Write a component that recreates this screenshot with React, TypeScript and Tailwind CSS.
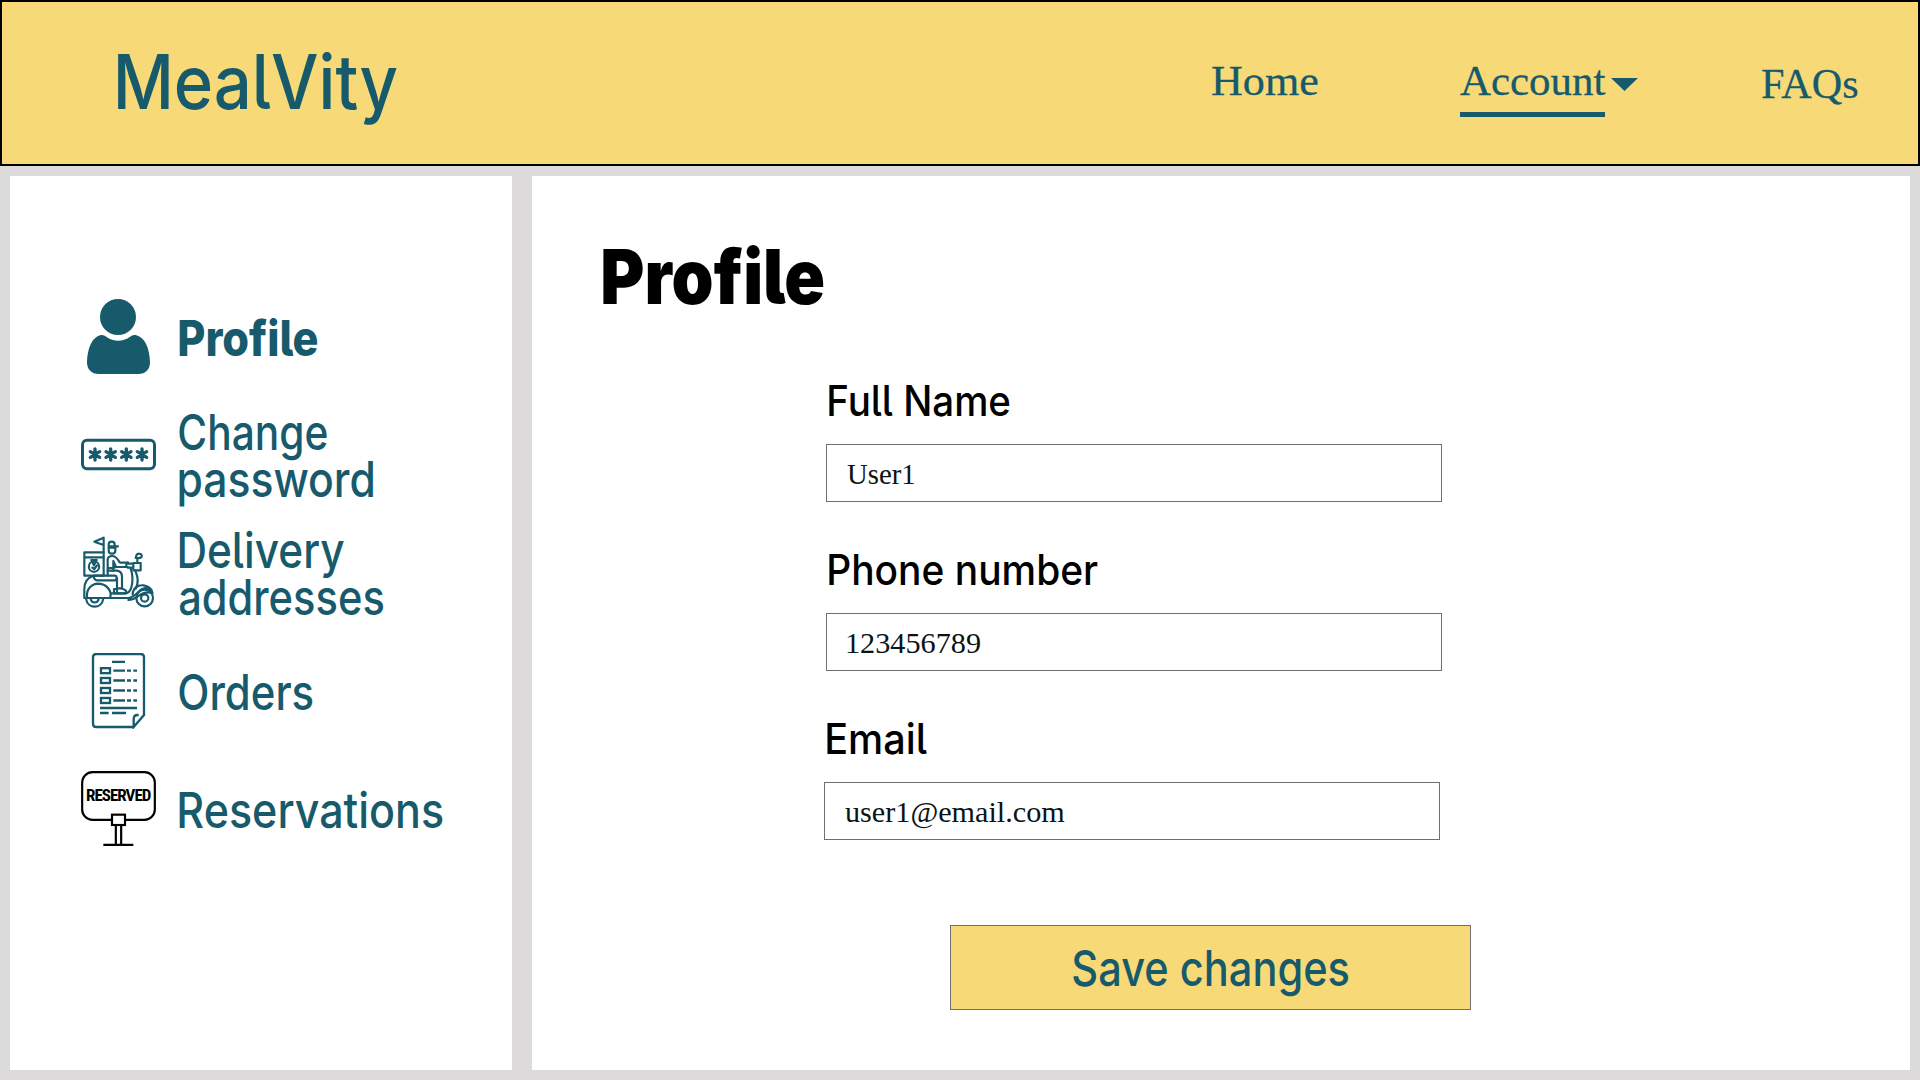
import { useLayoutEffect, useRef, useState } from "react";
import type { ReactNode } from "react";

type FitProps = { text: string; width: number; className?: string };

/* Text whose visible glyphs span exactly `width` pixels, starting at the left edge of the box. */
function Fit({ text, width, className = "" }: FitProps) {
  const ref = useRef<HTMLSpanElement>(null);
  const [transform, setTransform] = useState("none");

  useLayoutEffect(() => {
    const el = ref.current;
    const ctx = document.createElement("canvas").getContext("2d");
    if (!el || !ctx) return;
    const cs = getComputedStyle(el);
    ctx.font = `${cs.fontWeight} ${cs.fontSize} ${cs.fontFamily}`;
    const m = ctx.measureText(text);
    const left = -m.actualBoundingBoxLeft;
    const right = m.width - m.actualBoundingBoxRight;
    const scale = width / (el.offsetWidth - left - right);
    setTransform(`translateX(${-left * scale}px) scaleX(${scale})`);
  }, [text, width]);

  return (
    <span className="block whitespace-nowrap" style={{ width }}>
      <span ref={ref} className={`inline-block origin-left align-top ${className}`} style={{ transform }}>
        {text}
      </span>
    </span>
  );
}

const sans = "font-['Inter',sans-serif] [font-feature-settings:'cv05']";

function ProfileIcon() {
  return (
    <svg viewBox="33 42 228 228" className="size-[76px] shrink-0" fill="#175a6b">
      <circle cx="144" cy="96" r="54" />
      <path d="M92 150C99 149 104 151 110 156C131 171 158 171 179 156C185 151 190 149 197 150C225 156 239 190 240 232C240 254 226 267 205 267H87C65 267 51 254 51 232C52 190 66 156 92 150Z" />
    </svg>
  );
}

function PasswordIcon() {
  return (
    <svg viewBox="33 51 228 228" className="size-[76px] shrink-0" fill="none" stroke="#175a6b">
      <rect x="37.500" y="121" width="216" height="85" rx="13" strokeWidth="9" />
      {[75, 122, 169, 216].map((x) => (
        <path
          key={x}
          d={`M${x} 147V180M${x - 14} 155L${x + 14} 172M${x - 14} 172L${x + 14} 155`}
          strokeWidth="10"
          strokeLinecap="round"
        />
      ))}
    </svg>
  );
}

function ScooterIcon() {
  return (
    <svg
      viewBox="9 9 228 228"
      className="size-[76px] shrink-0"
      fill="none"
      stroke="#175a6b"
      strokeWidth="6.500"
      strokeLinejoin="round"
      strokeLinecap="round"
    >
      <path d="M77 131V17L49 29L77 39" />
      <path d="M77 61H19V131H77M19 76H77" />
      <circle cx="48" cy="104" r="15.500" />
      <path d="M40 84L48 100L56 84M40 84H56M43 107L49 111L57 100" />
      <path d="M92 47V38C92 26 110 26 110 38V43H120M92 47H110M92 43H112V56C112 68 92 68 92 56V47" />
      <path d="M89 131V83C89 75 95 72 103 72C115 72 119 83 126 92H150M89 108H106L114 105H149M106 87L114 105M106 87V116" />
      <path d="M89 116H117C128 117 132 124 132 135V170M117 138V178" />
      <path d="M117 169H132L144 176V184H108V171H117" />
      <path d="M149 92C143 96 143 103 149 107H166V95H149ZM166 93H188V115H166ZM178 93V82" />
      <path d="M173 78L176 68C178 64 190 64 191 69C193 76 187 79 180 78Z" />
      <path d="M172 116C181 137 181 156 173 170M158 110C165 127 165 153 159 169C156 179 148 184 139 184H101" />
      <path d="M48 131H111C117 131 117 145 111 145H57C49 144 47 139 48 131Z" />
      <path d="M43 133C26 139 19 152 19 171V198H151C168 197 178 182 190 172C202 164 217 168 223 183C209 179 193 183 183 191C172 199 167 204 151 204" />
      <path d="M27 194C25 171 40 156 60 155C81 155 99 171 98 190L96 198" />
      <path d="M164 187C164 169 179 158 197 160C213 163 222 173 223 183" />
      <path d="M24 200C29 232 71 232 76 200M38 200C41 215 59 215 62 200" />
      <circle cx="200" cy="198" r="25" />
      <circle cx="200" cy="198" r="11" />
    </svg>
  );
}

function OrdersIcon() {
  return (
    <svg viewBox="33 39 228 228" className="size-[76px] shrink-0" fill="none" stroke="#175a6b" strokeWidth="7">
      <path d="M191 261H79Q69 261 69 251V52Q69 42 79 42H212Q222 42 222 52V225L191 261V237Q191 225 203 225H206" />
      <path d="M126 65.500H165M90 204H201M90 219H116M126 219H168" />
      {[92, 121.5, 151.5, 181.5].map((y) => (
        <g key={y}>
          <rect x="93" y={y - 7.5} width="27" height="15" />
          <path d={`M130 ${y}H165M171 ${y}H183M190 ${y}H201`} />
        </g>
      ))}
    </svg>
  );
}

function ReservedIcon() {
  return (
    <svg viewBox="33 33 228 228" className="size-[76px] shrink-0" fill="none" stroke="#000" strokeWidth="6.500">
      <rect x="36.500" y="36.500" width="218" height="143" rx="31" />
      <rect x="126" y="164" width="39" height="31" fill="#fff" />
      <path d="M137.500 195V254M153.500 195V254M100 254.500H190" />
      <text
        x="48"
        y="123"
        textLength="196"
        lengthAdjust="spacing"
        fill="#000"
        stroke="none"
        className="font-['Liberation_Sans_Narrow','Roboto',sans-serif] text-[51px] font-bold [font-stretch:75%]"
      >
        RESERVED
      </text>
    </svg>
  );
}

type Item = { icon: ReactNode; lines: [string, number][]; bold?: boolean };

const items: Item[] = [
  { icon: <ProfileIcon />, lines: [["Profile", 138]], bold: true },
  { icon: <PasswordIcon />, lines: [["Change", 148], ["password", 194]] },
  { icon: <ScooterIcon />, lines: [["Delivery", 165], ["addresses", 204.5]] },
  { icon: <OrdersIcon />, lines: [["Orders", 134]] },
  { icon: <ReservedIcon />, lines: [["Reservations", 264]] },
];

type FieldProps = { label: string; labelWidth: number; value: string; valueWidth: number; className?: string };

function Field({ label, labelWidth, value, valueWidth, className = "" }: FieldProps) {
  return (
    <div className={`w-[616px] ${className}`}>
      <div className="mb-[22px] h-[42px] pl-[2.5px]">
        <Fit text={label} width={labelWidth} className={`${sans} text-[42px] leading-[42px] font-medium text-black`} />
      </div>
      <div className="flex h-[58px] items-center border border-[#707070] pt-[2px] pl-5">
        <Fit
          text={value}
          width={valueWidth}
          className="font-['Liberation_Serif',serif] text-[30px] leading-[30px] text-[#0a1417]"
        />
      </div>
    </div>
  );
}

export default function App() {
  const navText = "font-['Liberation_Serif',serif] text-[42px] leading-[42px] [-webkit-text-stroke:0.3px_#175a6b]";
  return (
    <div className="flex h-[1080px] w-[1920px] flex-col overflow-hidden bg-[#dddadb] text-[#175a6b]">
      <header className="flex h-[166px] shrink-0 items-start border-2 border-black bg-[#f7da77] pr-[61px] pl-[116px]">
        <div className="pt-[42px]">
          <Fit text="MealVity" width={279.5} className={`${sans} text-[75px] leading-[75px] font-medium`} />
        </div>
        <nav className="ml-auto flex items-start pt-[58px]">
          <Fit text="Home" width={106.5} className={navText} />
          <div className="ml-[141px] border-b-5 border-[#175a6b] pb-[10px]">
            <Fit text="Account" width={145.5} className={navText} />
          </div>
          <svg viewBox="0 0 27 13" className="mt-[18px] ml-[6px] h-[13px] w-[27px]" fill="#175a6b">
            <path d="M0 0H27L13.500 13Z" />
          </svg>
          <div className="mt-[3px] ml-[124px]">
            <Fit text="FAQs" width={95} className={navText} />
          </div>
        </nav>
      </header>

      <main className="flex flex-1 gap-5 p-[10px]">
        <aside className="flex w-[502px] shrink-0 flex-col gap-[42px] bg-white pt-[123px] pl-[71px]">
          {items.map(({ icon, lines, bold }) => (
            <div key={lines[0][0]} className="flex h-[76px] items-center gap-[22px]">
              {icon}
              <div className="pt-[2px]">
                {lines.map(([text, width]) => (
                  <Fit
                    key={text}
                    text={text}
                    width={width}
                    className={`${sans} text-[49px] leading-[47px] ${bold ? "font-extrabold" : "font-medium"}`}
                  />
                ))}
              </div>
            </div>
          ))}
        </aside>

        <section className="flex-1 bg-white pt-[62px]">
          <h1 className="ml-[70.5px] h-[76px]">
            <Fit text="Profile" width={220.5} className={`${sans} text-[76px] leading-[76px] font-black text-black`} />
          </h1>
          <div className="mt-[66px] ml-[294px] flex flex-col gap-[47px]">
            <Field label="Full Name" labelWidth={180} value="User1" valueWidth={68} />
            <Field label="Phone number" labelWidth={268.5} value="123456789" valueWidth={133} />
            <Field label="Email" labelWidth={97.5} value="user1@email.com" valueWidth={219} className="-ml-[2px]" />
          </div>
          <button className="mt-[85px] ml-[418px] flex h-[85px] w-[521px] items-center justify-center border border-[#707070] bg-[#f7da77] pt-[2px]">
            <Fit text="Save changes" width={275.5} className={`${sans} text-[49px] leading-[49px] font-medium`} />
          </button>
        </section>
      </main>
    </div>
  );
}
